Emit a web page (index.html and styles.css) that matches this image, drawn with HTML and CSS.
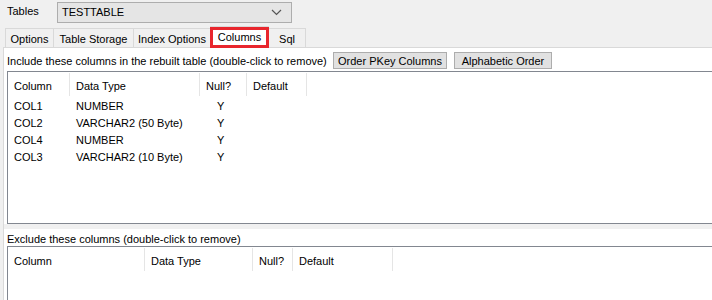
FILE: index.html
```html
<!DOCTYPE html>
<html lang="en">
<head>
  <meta charset="UTF-8">
  <title>Rebuild Table - Columns</title>
  <link rel="stylesheet" href="styles.css">
</head>
<body>
  <div class="top">
    <span class="top-label">Tables</span>
    <div class="combo">
      <span>TESTTABLE</span>
      <svg class="chev" width="11" height="7" viewBox="0 0 11 7"><path d="M1 1 L5.5 5.5 L10 1" fill="none" stroke="#555" stroke-width="1.2"/></svg>
    </div>
  </div>

  <div class="tabs">
    <div class="tab">Options</div>
    <div class="tab">Table Storage</div>
    <div class="tab">Index Options</div>
    <div class="tab active">Columns</div>
    <div class="tab">Sql</div>
  </div>

  <div class="panel">
    <div class="toolbar">
      <span class="caption">Include these columns in the rebuilt table (double-click to remove)</span>
      <button class="btn btn-pkey">Order PKey Columns</button>
      <button class="btn btn-alpha">Alphabetic Order</button>
    </div>

    <div class="list list-include">
      <div class="row head">
        <div class="c1">Column</div>
        <div class="c2">Data Type</div>
        <div class="c3">Null?</div>
        <div class="c4">Default</div>
      </div>
      <div class="row">
        <div class="c1">COL1</div><div class="c2">NUMBER</div><div class="c3">Y</div><div class="c4"></div>
      </div>
      <div class="row">
        <div class="c1">COL2</div><div class="c2">VARCHAR2 (50 Byte)</div><div class="c3">Y</div><div class="c4"></div>
      </div>
      <div class="row">
        <div class="c1">COL4</div><div class="c2">NUMBER</div><div class="c3">Y</div><div class="c4"></div>
      </div>
      <div class="row">
        <div class="c1">COL3</div><div class="c2">VARCHAR2 (10 Byte)</div><div class="c3">Y</div><div class="c4"></div>
      </div>
    </div>

    <div class="splitter"></div>

    <div class="caption-row">Exclude these columns (double-click to remove)</div>

    <div class="list list-exclude">
      <div class="row head">
        <div class="c1">Column</div>
        <div class="c2">Data Type</div>
        <div class="c3">Null?</div>
        <div class="c4">Default</div>
      </div>
    </div>
  </div>
</body>
</html>
```

FILE: styles.css
```css
html, body {
  margin: 0;
  padding: 0;
  height: 300px;
  overflow: hidden;
}
body {
  background-color: #f0f0f0;
  font-family: "Liberation Sans", Arial, sans-serif;
  font-size: 11px;
  color: #000;
}

/* table picker */
.top {
  height: 25px;
  display: flex;
  align-items: flex-start;
  padding-top: 2px;
  box-sizing: border-box;
}
.top-label {
  margin-left: 7px;
  width: 50px;
  line-height: 18px;
}
.combo {
  width: 235px;
  height: 21px;
  box-sizing: border-box;
  border: 1px solid #adadad;
  background-color: #e5e5e5;
  display: flex;
  align-items: center;
  justify-content: space-between;
  padding: 0 9px 0 4px;
}
.combo span {
  margin-top: -1px;
}
.chev {
  display: block;
}

/* tabs */
.tabs {
  display: flex;
  align-items: flex-end;
  height: 22px;
  padding-left: 5px;
}
.tab {
  height: 19px;
  box-sizing: border-box;
  border: 1px solid #d9d9d9;
  border-bottom: none;
  margin-right: -1px;
  text-align: center;
  line-height: 20px;
  background-color: #f0f0f0;
}
.tab:nth-child(1) { width: 49px; }
.tab:nth-child(2) { width: 81px; }
.tab:nth-child(3) { width: 78px; }
.tab:nth-child(4) { width: 59px; }
.tab:nth-child(5) { width: 38px; }
.tab.active {
  height: 22px;
  background-color: #fff;
  position: relative;
  z-index: 1;
  line-height: 21px;
  margin-bottom: -1px;
}
.tab.active::after {
  content: "";
  position: absolute;
  left: -1px;
  top: 0;
  right: -1px;
  bottom: 0;
  border: 3px solid #e8262d;
}

/* tab page */
.panel {
  margin-left: 3px;
  background-color: #fff;
  border-top: 1px solid #d9d9d9;
  border-left: 1px solid #d9d9d9;
  height: 260px;
}
.toolbar {
  height: 23px;
  display: flex;
  align-items: center;
  padding-left: 3px;
}
.caption {
  width: 326px;
  white-space: nowrap;
  margin-top: 3px;
}
.btn {
  height: 17px;
  box-sizing: border-box;
  border: 1px solid #adadad;
  background-color: #e1e1e1;
  font-family: inherit;
  font-size: 11px;
  padding: 0;
  color: #000;
  margin: 2px 7px 0 0;
}
.btn-pkey { width: 114px; }
.btn-alpha { width: 98px; }

.list {
  margin-left: 3px;
  border: 1px solid #828790;
  border-right: none;
  background-color: #fff;
  box-sizing: border-box;
}
.list-include { height: 153px; }
.list-exclude { height: 60px; }

.row {
  display: flex;
  height: 17px;
  line-height: 19px;
}
.row > div {
  box-sizing: border-box;
  padding-left: 6px;
  white-space: nowrap;
}
.row.head {
  height: 25px;
}
.row.head > div {
  border-right: 1px solid #e5e5e5;
  height: 23px;
  margin-top: 1px;
  line-height: 26px;
}

.list-include .c1 { width: 62px; }
.list-include .c2 { width: 130px; }
.list-include .c3 { width: 47px; }
.list-include .c4 { width: 60px; }
.list-include .row:not(.head) .c3 { padding-left: 17px; }

.list-exclude .c1 { width: 137px; }
.list-exclude .c2 { width: 108px; }
.list-exclude .c3 { width: 40px; }
.list-exclude .c4 { width: 100px; }

.splitter {
  height: 5px;
  background-color: #f0f0f0;
}
.caption-row {
  height: 17px;
  line-height: 20px;
  padding-left: 3px;
}
```
